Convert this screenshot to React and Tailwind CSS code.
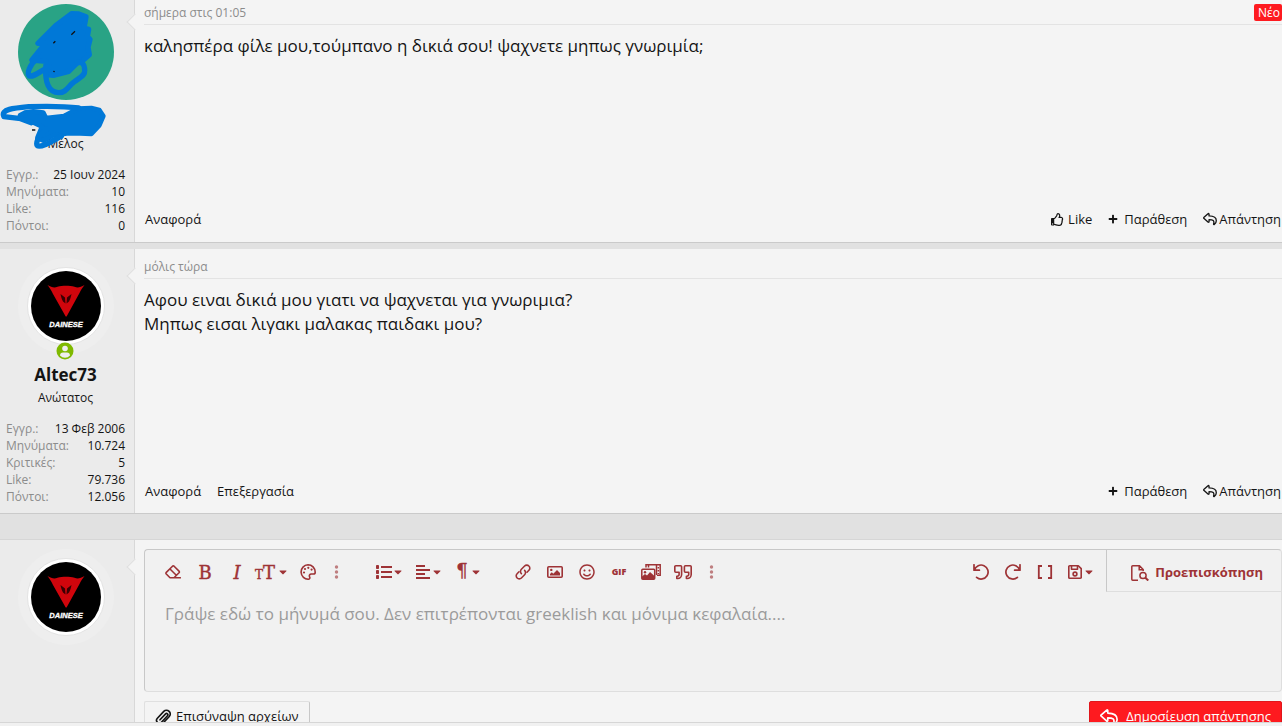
import { FaRegThumbsUp, FaPlus, FaRegSmile, FaCaretDown } from 'react-icons/fa';

const posts = [
    {
        id: 1,
        date: 'σήμερα στις 01:05',
        isNew: true,
        userTitle: 'Μέλος',
        stats: [
            ['Εγγρ.:', '25 Ιουν 2024'],
            ['Μηνύματα:', '10'],
            ['Like:', '116'],
            ['Πόντοι:', '0'],
        ],
        lines: ['καλησπέρα φίλε μου,τούμπανο η δικιά σου! ψαχνετε μηπως γνωριμία;'],
        own: false,
    },
    {
        id: 2,
        date: 'μόλις τώρα',
        isNew: false,
        userName: 'Altec73',
        userTitle: 'Ανώτατος',
        stats: [
            ['Εγγρ.:', '13 Φεβ 2006'],
            ['Μηνύματα:', '10.724'],
            ['Κριτικές:', '5'],
            ['Like:', '79.736'],
            ['Πόντοι:', '12.056'],
        ],
        lines: [
            'Αφου ειναι δικιά μου γιατι να ψαχνεται για γνωριμια?',
            'Μηπως εισαι λιγακι μαλακας παιδακι μου?',
        ],
        own: true,
    },
];

/* Shared wrapper for the stroked icons, drawn on a 16 unit grid */
function Icon({ className = 'size-4', children }) {
    return (
        <svg
            viewBox="0 0 16 16"
            className={`shrink-0 ${className}`}
            fill="none"
            stroke="currentColor"
            strokeWidth="1.6"
            strokeLinejoin="round"
            strokeLinecap="round"
            aria-hidden="true"
        >
            {children}
        </svg>
    );
}

const EraserIcon = () => (
    <Icon>
        <path d="M5 13.7 1.3 10a1.2 1.2 0 0 1 0-1.6l6.2-6.2a1.2 1.2 0 0 1 1.6 0l4.9 4.9a1.2 1.2 0 0 1 0 1.6L9 13.7M5 13.7h10.3M5 5l6.3 6.3" />
    </Icon>
);

/* Serif letters of the text tools, slightly thickened with an outline */
function LetterIcon({ width = 'w-4', box = '0 0 16 24', children }) {
    return (
        <svg
            viewBox={box}
            className={`h-6 shrink-0 overflow-visible ${width}`}
            fill="currentColor"
            stroke="currentColor"
            strokeWidth=".4"
            fontFamily="'DejaVu Serif', serif"
            fontSize="18"
            aria-hidden="true"
        >
            {children}
        </svg>
    );
}

const PaletteIcon = () => (
    <Icon>
        <path d="M8 .8a7.2 7.2 0 1 0 .6 14.4c1.3-.2 1.5-1.3 1-2.3-.7-1.5.1-2.9 1.7-2.9h2.2c1 0 1.7-.8 1.7-1.8C15.1 4 12 .8 8 .8Z" />
        <g fill="currentColor" stroke="none">
            <circle cx="4" cy="8.5" r="1.1" />
            <circle cx="5" cy="5" r="1.1" />
            <circle cx="8.3" cy="3.8" r="1.1" />
            <circle cx="11.6" cy="5.6" r="1.1" />
        </g>
    </Icon>
);

const DotsIcon = () => (
    <Icon className="size-4 opacity-60">
        <g fill="currentColor" stroke="none">
            <circle cx="7.5" cy="3" r="1.7" />
            <circle cx="7.5" cy="8" r="1.7" />
            <circle cx="7.5" cy="13" r="1.7" />
        </g>
    </Icon>
);

const ListIcon = () => (
    <Icon>
        <g fill="currentColor" stroke="none">
            <rect x="0" y="1" width="3" height="4" rx=".8" />
            <rect x="0" y="6" width="3" height="4" rx=".8" />
            <rect x="0" y="11" width="3" height="4" rx=".8" />
            <rect x="5" y="2" width="11" height="2" />
            <rect x="5" y="7" width="11" height="2" />
            <rect x="5" y="12" width="11" height="2" />
        </g>
    </Icon>
);

const AlignIcon = () => (
    <Icon>
        <g fill="currentColor" stroke="none">
            <rect x="1" y="1" width="9" height="2" />
            <rect x="1" y="5" width="14" height="2" />
            <rect x="1" y="9" width="9" height="2" />
            <rect x="1" y="13" width="14" height="2" />
        </g>
    </Icon>
);

const LinkIcon = () => (
    <Icon>
        <path d="M6.4 9.6a3.1 3.1 0 0 1 0-4.400l3.200-3.200a3 3 0 0 1 4.300 0 3 3 0 0 1 0 4.300L12 8.200" />
        <path d="M9.600 6.400a3.100 3.100 0 0 1 0 4.400L6.400 14a3 3 0 0 1-4.300 0 3 3 0 0 1 0-4.300L4 7.800" />
    </Icon>
);

const ImageIcon = () => (
    <Icon>
        <rect x=".8" y="2.7" width="14.4" height="10.6" rx="1" />
        <circle cx="4.3" cy="5.9" r="1.2" fill="currentColor" stroke="none" />
        <path d="M3 11.5V10l1.800-1.700 1.500 1.400L10 6l3 3v2.500Z" fill="currentColor" stroke="none" />
    </Icon>
);

const MediaIcon = () => (
    <svg viewBox="0 0 20 16" className="h-4 w-5 shrink-0" fill="none" stroke="currentColor" strokeWidth="1.5" aria-hidden="true">
        <path d="M5 3.500V.8h14.200v10.400H16M15.500 1v10" />
        <path d="M17.300 3v1.500M17.300 6v1.500M17.300 9v1" />
        <path d="M7.500 1v2.500" />
        <rect x=".8" y="5.2" width="12.9" height="10" rx="1" />
        <circle cx="4" cy="8.2" r="1.2" fill="currentColor" stroke="none" />
        <path d="M1 15v-2.500l3-2.500 2 1.500 3-3.500 4.500 4V15Z" fill="currentColor" stroke="none" />
    </svg>
);

const QuoteIcon = () => (
    <svg viewBox="0 0 18 16" className="h-4 w-[18px] shrink-0" fill="none" stroke="currentColor" strokeWidth="1.6" strokeLinejoin="round" aria-hidden="true">
        <path d="M7.600 2.800v7.700a4 4 0 0 1-4 4h-.8v-2.300h.5a1.800 1.800 0 0 0 1.800-1.800V8.200H1.800a1 1 0 0 1-1-1V2.800a1 1 0 0 1 1-1h4.800a1 1 0 0 1 1 1Z" />
        <path d="M17.200 2.800v7.700a4 4 0 0 1-4 4h-.8v-2.300h.5a1.800 1.800 0 0 0 1.800-1.800V8.200h-3.300a1 1 0 0 1-1-1V2.800a1 1 0 0 1 1-1h4.800a1 1 0 0 1 1 1Z" />
    </svg>
);

const UndoIcon = ({ className = 'size-4' }) => (
    <Icon className={className}>
        <path strokeWidth="1.7" d="M1 .8v5.400h5.400M1.400 6A7 7 0 1 1 3.600 13.400" />
    </Icon>
);

const BracketsIcon = () => (
    <Icon>
        <path strokeWidth="1.8" strokeLinecap="butt" strokeLinejoin="miter" d="M5 2H1.800v12H5M11 2h3.200v12H11" />
    </Icon>
);

const SaveIcon = () => (
    <Icon>
        <path d="M1.800 2.600a.9.900 0 0 1 .9-.9h8.600l2.900 2.900v8.800a.9.900 0 0 1-.9.900H2.700a.9.900 0 0 1-.9-.9Z" />
        <path d="M4.500 2v3.300h6V2" />
        <circle cx="8" cy="10" r="1.9" />
    </Icon>
);

const PreviewIcon = () => (
    <svg viewBox="0 0 18 16" className="h-4 w-[18px] shrink-0" fill="none" stroke="currentColor" strokeWidth="1.5" aria-hidden="true">
        <path d="M7 15.200H1.700a.9.900 0 0 1-.9-.9V1.700a.9.900 0 0 1 .9-.9h6.800L12.200 4.500V6M8.200.8v4h4" />
        <circle cx="12" cy="10.5" r="3.1" />
        <path strokeWidth="2" d="m14.300 12.800 3 2.700" />
    </svg>
);

const ReplyIcon = ({ className = 'size-[14px]' }) => (
    <Icon className={className}>
        <path strokeWidth="1.5" d="M.9 6.400 6 1.800c.3-.3.9-.1.900.4v2.300c4.800.1 8.300 1.100 8.300 5.400 0 1.700-1.100 3.400-2.300 4.300-.4.300-.9-.1-.8-.5 1.200-4-.6-5-5.200-5v2.500c0 .5-.6.700-.9.400L.9 7.100a.5.500 0 0 1 0-.7Z" />
    </Icon>
);

const PaperclipIcon = () => (
    <Icon>
        <path d="m5 10.800 5.600-5.900a1.300 1.300 0 0 1 1.900 1.800l-6.100 6.500a2.700 2.700 0 0 1-4 .1 3 3 0 0 1 0-4.100L8.800 2.400a3.700 3.700 0 0 1 5.300 0 3.900 3.900 0 0 1 0 5.300l-4.900 5.200" />
    </Icon>
);

const Caret = () => <FaCaretDown className="size-3 shrink-0" aria-hidden="true" />;

/* Green default avatar, the member has scribbled over it */
function ScribbledAvatar() {
    return (
        <svg viewBox="54 12 288 288" className="size-24" aria-hidden="true">
            <circle cx="198" cy="156" r="144" fill="#29a385" />
            <g fill="#0078d7" stroke="#0078d7" strokeWidth="16" strokeLinecap="round" strokeLinejoin="round">
                <path d="M215 41 168 76l-54 54 22 0-40 50 42 4 0 40 22 2 46-12 22-22 22-12 18-16-4-22 6-24-8-8 4-22-14-4 6-34-22-8Z" />
                <path fill="none" d="M112 174c-24 22-32 46-24 54 14 4 34-16 60-28M138 200c-4 46 8 78 38 78 24 0 28-20 46-32 18-14 34-20 32-34 0-22-8-26-24-26" />
            </g>
            <path d="m214 104 11-10M160 130l6-6M160 214l4 1" stroke="#111" strokeWidth="4" />
        </svg>
    );
}

/* Scribble that hides the user name and overlaps the title a little */
function ScribbledName() {
    return (
        <svg viewBox="0 306 321 144" className="pointer-events-none absolute top-[102px] left-0 h-12 w-[107px]" aria-hidden="true">
            <path d="M96 390h10M192 344h10" stroke="#111" strokeWidth="5" />
            <g fill="#0078d7" stroke="#0078d7" strokeWidth="14" strokeLinecap="round" strokeLinejoin="round">
                <path d="m60 346 14-8 26-4 30 4 8 16 54-6 42-22 40-2 24 6 12 18-12 28-24 26-34-2-40 0-40 6-30 16-18-8 14-34-30-14-22-8Z" />
                <path fill="none" strokeWidth="16" d="M94 368 62 356 12 350c-12-22 30-26 74-30 60-2 104-2 150 4M140 388c-26 18-36 46-26 50 20 4 50-20 70-30" />
            </g>
        </svg>
    );
}

function DaineseAvatar() {
    return (
        <svg viewBox="0 0 96 96" className="size-24" role="img" aria-label="Altec73">
            <circle cx="48" cy="48" r="48" fill="#eeeeee" />
            <circle cx="48" cy="48" r="38.5" fill="#fff" stroke="#dedede" strokeWidth=".8" />
            <circle cx="48" cy="48" r="35" fill="#000" />
            <path d="M29.500 27c4 2.500 7 3 10 1.800 5-1.300 12-1.300 17 0 3 1.200 6 .7 10-1.800-2 2.500-3.500 5-5 8L48.600 58.500h-.9L35 36c-1.500-3.500-3.500-6.500-5.500-9Z" fill="#d0050c" />
            <path d="m42.500 36 4.500 3.500.5 6-2.500-2c-1.200-2.500-2-4.500-2.500-7.500ZM53.500 36l-4.500 3.500-.5 6 2.500-2c1.200-2.500 2-4.500 2.500-7.500Z" fill="#3a0003" />
            <text x="48" y="69" textAnchor="middle" fill="#fff" stroke="#fff" strokeWidth=".3" fontSize="7.5" fontWeight="700" fontStyle="italic" fontFamily="'Liberation Sans', sans-serif">
                DAINESE
            </text>
        </svg>
    );
}

function OnlineBadge() {
    return (
        <svg viewBox="0 0 18 18" className="absolute -bottom-[6px] left-[38px] size-[18px]" role="img" aria-label="Online">
            <circle cx="9" cy="9" r="8.5" fill="#7fb900" />
            <circle cx="9" cy="6.5" r="2.8" fill="#eee" />
            <path d="M4 13.400a3.200 3.200 0 0 1 3-3h4a3.200 3.200 0 0 1 3 3 6.600 6.600 0 0 1-10 0Z" fill="#eee" />
        </svg>
    );
}

/* Left column of a post, with the notch that points at the avatar */
function UserCell({ first, children }) {
    return (
        <aside className={`relative w-[135px] shrink-0 border-r border-[#d8d8d8] bg-[#ebebeb] px-1.5 pb-2 ${first ? 'pt-1' : 'pt-[9px]'}`}>
            {children}
            <span className={`absolute -right-[7px] size-3 rotate-45 border-b border-l border-[#dedede] bg-[#f4f4f4] ${first ? 'top-4' : 'top-[21px]'}`} />
        </aside>
    );
}

function ActionLink({ children }) {
    return (
        <a href="#" className="flex items-center gap-1 hover:underline">
            {children}
        </a>
    );
}

function Post({ post }) {
    const first = post.id === 1;
    return (
        <article className="flex border-b border-[#cacaca] bg-[#f4f4f4]">
            <UserCell first={first}>
                <div className="relative ml-3 size-24">
                    {first ? <ScribbledAvatar /> : <DaineseAvatar />}
                    {!first && <OnlineBadge />}
                </div>
                <h4 className="mt-[9px] h-6 pr-[3px] text-center text-[17px] leading-6 font-bold">
                    {post.userName && <a href="#">{post.userName}</a>}
                </h4>
                <h5 className="mt-[3px] pr-[3px] text-center text-xs leading-4">{post.userTitle}</h5>
                {first && <ScribbledName />}
                <dl className="mt-[14px] pr-[3px] text-xs leading-[17px]">
                    {post.stats.map(([label, value]) => (
                        <div key={label} className="flex justify-between">
                            <dt className="text-[#8c8c8c]">{label}</dt>
                            <dd>{value}</dd>
                        </div>
                    ))}
                </dl>
            </UserCell>
            <div className="flex min-w-0 flex-1 flex-col pl-[9px]">
                <header className={`flex items-center justify-between border-b border-[#e3e3e3] text-xs ${first ? 'h-[25px] pt-px' : 'h-[30px] pt-1.5'}`}>
                    <a href="#" className="text-[#8c8c8c]">{post.date}</a>
                    {post.isNew && <span className="rounded-xs bg-[#fe1a1f] py-px pr-0.5 pl-1 text-xs leading-[15px] text-white">Νέο</span>}
                </header>
                <div className="flex-1 pt-[9px] text-[17px] leading-6">
                    {post.lines.map((line) => (
                        <p key={line}>{line}</p>
                    ))}
                </div>
                <footer className={`flex justify-between pl-px text-[13px] leading-5 ${first ? 'pb-[13px]' : 'pb-3'}`}>
                    <div className="flex gap-4">
                        <ActionLink>Αναφορά</ActionLink>
                        {post.own && <ActionLink>Επεξεργασία</ActionLink>}
                    </div>
                    <div className="flex gap-4 pr-px">
                        {!post.own && (
                            <ActionLink>
                                <FaRegThumbsUp className="size-[13px]" />
                                Like
                            </ActionLink>
                        )}
                        <ActionLink>
                            <FaPlus className="mr-0.5 size-[10px]" />
                            Παράθεση
                        </ActionLink>
                        <a href="#" className="flex items-center gap-0.5 hover:underline">
                            <ReplyIcon />
                            Απάντηση
                        </a>
                    </div>
                </footer>
            </div>
        </article>
    );
}

function Tool({ label, menu, narrow, children }) {
    const width = menu ? 'w-[39px]' : narrow ? 'w-[26px]' : 'w-8';
    return (
        <button type="button" aria-label={label} className={`flex h-10 items-center justify-center hover:bg-black/5 ${width}`}>
            {children}
            {menu && <Caret />}
        </button>
    );
}

function Toolbar() {
    return (
        <div className="flex text-[#9e3336]">
            <div className="flex flex-1 gap-5 pt-0.5 pl-3">
                <div className="flex">
                    <Tool label="Remove formatting"><EraserIcon /></Tool>
                    <Tool label="Bold"><LetterIcon><text x="8" y="19" textAnchor="middle">B</text></LetterIcon></Tool>
                    <Tool label="Italic"><LetterIcon><text x="8" y="19" textAnchor="middle" fontStyle="italic">I</text></LetterIcon></Tool>
                    <Tool label="Font size" menu>
                        <LetterIcon width="w-[21px]" box="0 0 21 24">
                            <text x="-1" y="19" fontSize="12">T</text>
                            <text x="7" y="19">T</text>
                        </LetterIcon>
                    </Tool>
                    <Tool label="Text color"><PaletteIcon /></Tool>
                    <Tool label="More text options" narrow><DotsIcon /></Tool>
                </div>
                <div className="flex">
                    <Tool label="List" menu><ListIcon /></Tool>
                    <Tool label="Alignment" menu><AlignIcon /></Tool>
                    <Tool label="Paragraph format" menu>
                        <LetterIcon><text x="8" y="17" textAnchor="middle">¶</text></LetterIcon>
                    </Tool>
                </div>
                <div className="flex">
                    <Tool label="Insert link"><LinkIcon /></Tool>
                    <Tool label="Insert image"><ImageIcon /></Tool>
                    <Tool label="Smilies"><FaRegSmile className="size-4" /></Tool>
                    <Tool label="Insert GIF"><span className="text-[9px] font-extrabold">GIF</span></Tool>
                    <Tool label="Media"><MediaIcon /></Tool>
                    <Tool label="Quote"><QuoteIcon /></Tool>
                    <Tool label="More options" narrow><DotsIcon /></Tool>
                </div>
                <div className="mr-[6px] ml-auto flex">
                    <Tool label="Undo"><UndoIcon /></Tool>
                    <Tool label="Redo"><UndoIcon className="size-4 -scale-x-100" /></Tool>
                    <Tool label="Toggle BB code"><BracketsIcon /></Tool>
                    <Tool label="Drafts" menu><SaveIcon /></Tool>
                </div>
            </div>
            <button type="button" className="flex h-[42px] items-center gap-1.5 border-b border-l border-b-[#dedede] border-l-[#c8c8c8] pt-1 pr-[18px] pl-6 text-[13px] font-bold">
                <PreviewIcon />
                Προεπισκόπηση
            </button>
        </div>
    );
}

function QuickReply() {
    return (
        <form className="flex flex-1 border-t border-[#d6d6d6] bg-[#f4f4f4]" onSubmit={(e) => e.preventDefault()}>
            <UserCell>
                <div className="ml-3"><DaineseAvatar /></div>
            </UserCell>
            <div className="min-w-0 flex-1 pt-[9px] pl-[9px]">
                <div className="rounded border border-[#dedede] border-t-[#c8c8c8] border-l-[#c8c8c8] bg-[#f1f1f1]">
                    <Toolbar />
                    <textarea
                        aria-label="Μήνυμα"
                        className="block h-[99px] w-full resize-none px-5 pt-[10px] text-[17px] leading-6 outline-none placeholder:text-[#9b9b9b]"
                        placeholder="Γράψε εδώ το μήνυμά σου. Δεν επιτρέπονται greeklish και μόνιμα κεφαλαία...."
                    />
                </div>
                <div className="mt-[9px] flex items-start justify-between text-[13px]">
                    <button type="button" className="flex h-8 items-center gap-[5px] rounded-xs border border-[#e0e0e0] border-r-[#c8c8c8] px-[10px]">
                        <PaperclipIcon />
                        Επισύναψη αρχείων
                    </button>
                    <button type="submit" className="flex h-8 items-center gap-2 rounded-xs border border-[#e0161b] bg-[#fe1a1f] px-[10px] text-white">
                        <ReplyIcon className="size-[18px]" />
                        Δημοσίευση απάντησης
                    </button>
                </div>
            </div>
        </form>
    );
}

export default function App() {
    return (
        <div className="flex h-screen flex-col bg-[#e1e1e1] font-['Open_Sans','Noto_Sans',sans-serif] text-[#141414]">
            <main className="flex min-h-0 flex-1 flex-col overflow-hidden">
                <div className="flex shrink-0 flex-col gap-1.5">
                    {posts.map((post) => (
                        <Post key={post.id} post={post} />
                    ))}
                </div>
                <div className="mt-[25px] flex min-h-0 flex-1">
                    <QuickReply />
                </div>
            </main>
            <div className="h-1 shrink-0 border-t border-[#d6d6d6] bg-[#f1f1f1]" />
        </div>
    );
}
